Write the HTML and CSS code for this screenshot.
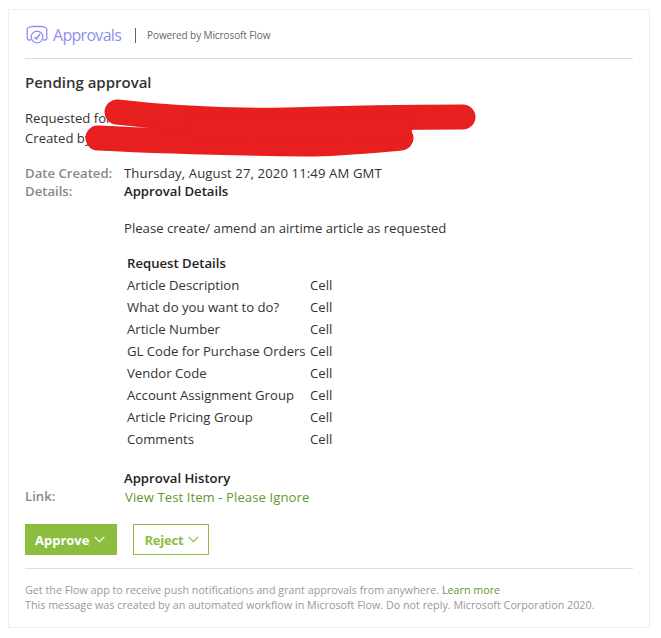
FILE: index.html
```html
<!DOCTYPE html>
<html lang="en">
<head>
    <meta charset="UTF-8">
    <title>Pending approval</title>
    <link rel="stylesheet" href="styles.css">
</head>
<body>
    <div class="card">
        <!-- Header -->
        <div class="brand">
            <svg class="brand-icon" width="22" height="20" viewBox="0 0 22 20" fill="none" stroke="#8f8ff0" stroke-width="1.3">
                <path d="M5 15H3a1.8 1.8 0 0 1-1.8-1.8V4.2A2 2 0 0 1 3 2.4l3 -.9h10l3 .9a2 2 0 0 1 1.8 1.8v9a1.8 1.8 0 0 1-1.8 1.8h-2"/>
                <circle cx="11" cy="12" r="5.8"/>
                <path d="M8.4 12l2 2 3.6-5" stroke-width="1.5"/>
            </svg>
            <span class="brand-name">Approvals</span>
            <span class="brand-sep"></span>
            <span class="brand-sub">Powered by Microsoft Flow</span>
        </div>

        <h1 class="title">Pending approval</h1>
        <div class="people">
            <div>Requested for</div>
            <div>Created by</div>
        </div>

        <!-- Details -->
        <div class="fields">
            <div class="label">Date Created:</div>
            <div class="date">Thursday, August 27, 2020 11:49 AM GMT</div>
            <div class="label">Details:</div>
            <div>
                <div class="strong">Approval Details</div>
                <p class="intro">Please create/ amend an airtime article as requested</p>
                <table class="request">
                    <tr><th colspan="2">Request Details</th></tr>
                    <tr><td>Article Description</td><td>Cell</td></tr>
                    <tr><td>What do you want to do?</td><td>Cell</td></tr>
                    <tr><td>Article Number</td><td>Cell</td></tr>
                    <tr><td>GL Code for Purchase Orders</td><td>Cell</td></tr>
                    <tr><td>Vendor Code</td><td>Cell</td></tr>
                    <tr><td>Account Assignment Group</td><td>Cell</td></tr>
                    <tr><td>Article Pricing Group</td><td>Cell</td></tr>
                    <tr><td>Comments</td><td>Cell</td></tr>
                </table>
                <div class="strong history">Approval History</div>
            </div>
            <div class="label">Link:</div>
            <div><a class="item-link" href="#">View Test Item - Please Ignore</a></div>
        </div>

        <!-- Actions -->
        <div class="actions">
            <button class="btn btn-approve">Approve
                <svg width="11" height="7" viewBox="0 0 11 7" fill="none" stroke="#fff" stroke-width="1.1"><path d="M.7.8l4.8 4.8L10.3.8"/></svg>
            </button>
            <button class="btn btn-reject">Reject
                <svg width="11" height="7" viewBox="0 0 11 7" fill="none" stroke="#8cbd3f" stroke-width="1.1"><path d="M.7.8l4.8 4.8L10.3.8"/></svg>
            </button>
        </div>

        <div class="foot">
            <div>Get the Flow app to receive push notifications and grant approvals from anywhere. <a href="#">Learn more</a></div>
            <div>This message was created by an automated workflow in Microsoft Flow. Do not reply. Microsoft Corporation 2020.</div>
        </div>

        <!-- red redaction scribble on top of the names -->
        <svg class="scribble" width="661" height="170" viewBox="0 0 661 170" fill="none" stroke="#e81f1f" stroke-width="25" stroke-linecap="round" stroke-linejoin="round">
            <path d="M117 112c50 6 110 9 170 8 60-2 120-3 176-3"/>
            <path d="M98 138c60 3 130 5 209 6 30 0 60-3 94-6"/>
            <path d="M200 125l200 2"/>
        </svg>
    </div>
</body>
</html>
```

FILE: styles.css
```css
html, body {
    margin: 0;
    background-color: #fff;
}

body {
    font-family: "Open Sans", "Noto Sans", sans-serif;
    font-size: 13.15px;
    color: #333;
    padding: 9px 11px 8px 8px;
}

.card {
    border: 1px solid #eee;
    height: 619px;
    padding: 0 16px;
    box-sizing: border-box;
}

.brand {
    display: flex;
    align-items: center;
    height: 46px;
    padding-top: 2px;
    border-bottom: 1px solid #ddd;
    padding-left: 1px;
}

.brand-icon {
    margin-right: 5px;
}

.brand-name {
    font-size: 16px;
    color: #8f8ff0;
    letter-spacing: -0.7px;
}

.brand-sep {
    width: 1px;
    height: 15px;
    background-color: #666;
    margin: 0 11px 0 14px;
}

.brand-sub {
    font-size: 10px;
    color: #666;
    letter-spacing: -0.1px;
}

.title {
    font-size: 15px;
    font-weight: 600;
    line-height: 20px;
    margin: 13px 0 16px;
    color: #333;
}

.people {
    line-height: 20px;
    margin-bottom: 16px;
}

.fields {
    display: grid;
    grid-template-columns: 99px 1fr;
    line-height: 18px;
}

.date {
    letter-spacing: 0.1px;
}

.label {
    font-weight: 600;
    color: #888;
}

.strong {
    font-weight: 600;
    color: #222;
}

.intro {
    margin: 19px 0 0;
}

.request {
    border-collapse: collapse;
    margin: 15px 0 0 3px;
}

.request th {
    text-align: left;
    font-weight: 600;
    color: #222;
    padding: 0;
    height: 22px;
}

.request td {
    padding: 0;
    height: 22px;
}

.request td:first-child {
    width: 183px;
}

.history {
    margin-top: 19px;
}

.item-link {
    display: block;
    margin: 1px 0 0 1px;
    letter-spacing: 0.06px;
    color: #5f9a2e;
    text-decoration: none;
}

.actions {
    display: flex;
    gap: 16px;
    margin-top: 18px;
    padding-bottom: 13px;
    border-bottom: 1px solid #ddd;
}

.btn {
    display: flex;
    align-items: center;
    gap: 5px;
    height: 31px;
    padding: 0 11px 0 9px;
    font-family: inherit;
    font-size: 13px;
    font-weight: 700;
    border: 1px solid #8cbd3f;
    background-color: #8cbd3f;
    color: #fff;
}

.btn-reject {
    gap: 4px;
    padding: 0 9px 0 10px;
    letter-spacing: -0.2px;
    background-color: #fff;
    color: #8cbd3f;
}

.foot {
    margin-top: 14px;
    font-size: 10.75px;
    line-height: 15px;
    color: #999;
}

.foot a {
    color: #5f9a2e;
    text-decoration: none;
}

.scribble {
    position: absolute;
    left: 0;
    top: 0;
}
```
